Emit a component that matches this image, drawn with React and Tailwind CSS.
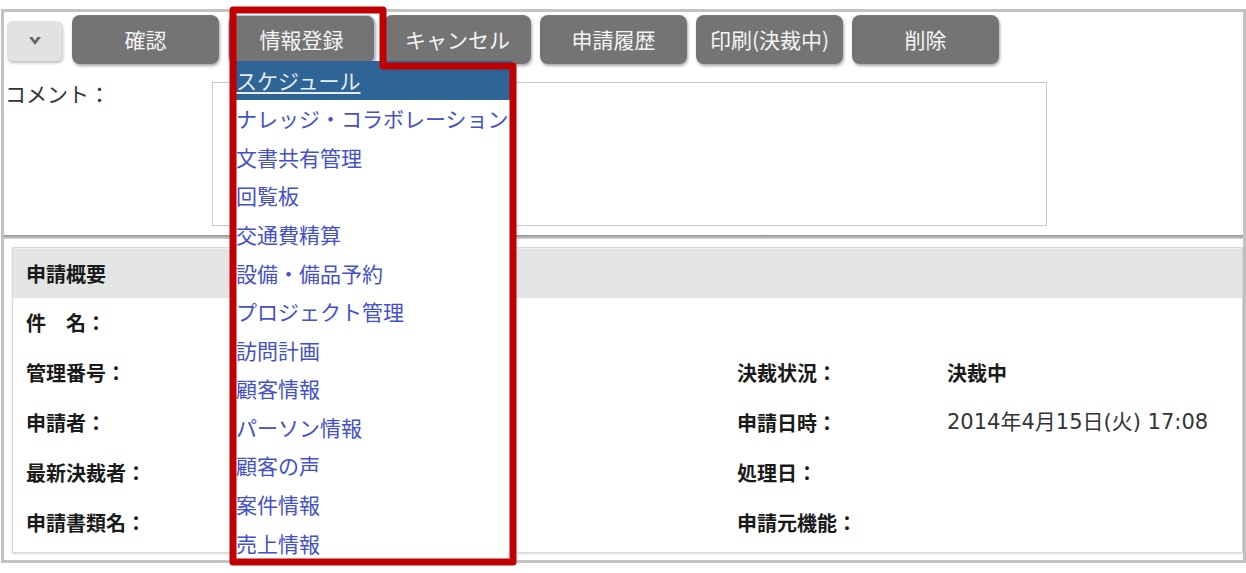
import React from "react";

const buttons = ["確認", "情報登録", "キャンセル", "申請履歴", "印刷(決裁中)", "削除"];
const menu = [
  "スケジュール",
  "ナレッジ・コラボレーション",
  "文書共有管理",
  "回覧板",
  "交通費精算",
  "設備・備品予約",
  "プロジェクト管理",
  "訪問計画",
  "顧客情報",
  "パーソン情報",
  "顧客の声",
  "案件情報",
  "売上情報",
];

const rows = [
  ["件　名：", "", ""],
  ["管理番号：", "決裁状況：", "決裁中"],
  ["申請者：", "申請日時：", "2014年4月15日(火) 17:08"],
  ["最新決裁者：", "処理日：", ""],
  ["申請書類名：", "申請元機能：", ""],
];

export default function App() {
  return (
    <div className="relative w-[1246px] h-[573px] bg-white overflow-hidden pt-[9px] pl-[1px] font-['Noto_Sans_CJK_JP','Noto_Sans',sans-serif]">
      <div className="w-[1245px] border-[3px] border-[#c3c3c3]">
        {/* top section */}
        <div className="h-[223px]">
          <div className="flex items-start pt-[3px] pl-[3px] gap-[10px]">
            <div className="mt-[6px] w-[55px] h-[40px] rounded-[5px] bg-[#e2e2e2] shadow-[1px_2px_3px_rgba(0,0,0,0.25)] flex items-center justify-center">
              <svg width="14" height="10" viewBox="0 0 14 10">
                <path d="M1 1 L7 9 L13 1 L9.6 1 L7 4.6 L4.4 1 Z" fill="#666" />
              </svg>
            </div>
            <div className="flex gap-[9px]">
              {buttons.map((b, i) => (
                <div
                  key={b}
                  className={
                    "w-[147px] h-[49px] rounded-[8px] bg-[#747474] shadow-[1px_2px_3px_rgba(0,0,0,0.35)] flex items-center justify-center text-[21px] text-[#f4f4f4] " +
                    (i === 1 ? "border border-[#a9c8ea]" : "")
                  }
                >
                  {b}
                </div>
              ))}
            </div>
          </div>
          <div className="flex mt-[18px]">
            <div className="w-[208px] pl-[1px] text-[21px] leading-[22px] text-[#333]">コメント：</div>
            <div className="w-[835px] h-[144px] border border-[#c8c8c8] bg-white"></div>
          </div>
        </div>
        {/* separator */}
        <div className="h-[4px] bg-gradient-to-b from-[#8e8e8e] to-[#d8d8d8]"></div>
        {/* bottom section */}
        <div className="pt-[8px] pl-[8px] pb-[7px]">
          <div className="border border-[#d9d9d9] shadow-[0_1px_2px_rgba(0,0,0,0.15)]">
            <div className="h-[50px] bg-[#e3e4e4] border-t border-[#f0f0f0] flex items-center pl-[13px] text-[20px] font-bold text-[#1a1a1a]">
              申請概要
            </div>
            {rows.map((r, i) => (
              <div key={i} className="h-[50px] flex items-center pl-[13px] text-[20px] text-[#1a1a1a]">
                <div className="w-[711px] font-bold">{r[0]}</div>
                <div className="w-[210px] font-bold">{r[1]}</div>
                <div
                  className={
                    i === 1
                      ? "font-bold"
                      : "text-[#333] text-[21px] font-['DejaVu_Sans','Noto_Sans_CJK_JP',sans-serif]"
                  }
                >
                  {r[2]}
                </div>
              </div>
            ))}
            <div className="h-[4px]"></div>
          </div>
        </div>
      </div>

      {/* dropdown menu */}
      <div className="absolute left-[234px] top-[61px] w-[278px] bg-white">
        {menu.map((m, i) => (
          <div
            key={m}
            className={
              "h-[38.6px] flex items-center pl-[2px] text-[21px] whitespace-nowrap " +
              (i === 0 ? "bg-[#2f6497] text-[#e6edf5] underline underline-offset-[3px]" : "text-[#4450cc]")
            }
          >
            {m}
          </div>
        ))}
      </div>

      {/* red annotation frame */}
      <svg className="absolute left-0 top-0 pointer-events-none" width="1246" height="573">
        <path
          d="M233 10 H383 V66 H513 V562 H233 Z"
          fill="none"
          stroke="#c00000"
          strokeWidth="7"
          strokeLinejoin="round"
        />
      </svg>
    </div>
  );
}
